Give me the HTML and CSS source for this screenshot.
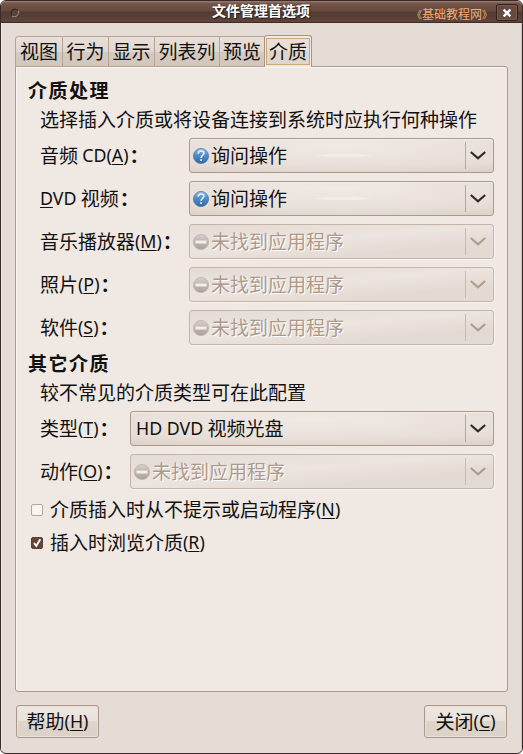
FILE: index.html
```html
<!DOCTYPE html>
<html lang="zh-CN">
<head>
<meta charset="utf-8">
<title>文件管理首选项</title>
<link rel="stylesheet" href="styles.css">
</head>
<body>
<svg class="defs" width="0" height="0">
  <defs>
    <linearGradient id="blue" x1="0" y1="0" x2="0" y2="1"><stop offset="0" stop-color="#a3bcdf"/><stop offset=".45" stop-color="#4c8fc8"/><stop offset="1" stop-color="#3566a0"/></linearGradient>
    <linearGradient id="gray" x1="0" y1="0" x2="0" y2="1"><stop offset="0" stop-color="#d6cec8"/><stop offset="1" stop-color="#a9a29c"/></linearGradient>
    <symbol id="ask" viewBox="0 0 16 16"><circle cx="8" cy="8" r="7.6" fill="url(#blue)" stroke="#3f76ae" stroke-width=".7"/><path d="M5.2 5.7C5.3 3.8 6.3 2.9 8.1 2.9c1.7 0 2.8.9 2.8 2.4 0 2.1-2.8 2.2-2.8 4.6" fill="none" stroke="#e8f1fa" stroke-width="1.5"/><path d="M7.2 11.2h1.8v1.8H7.2z" fill="#e8f1fa"/></symbol>
    <symbol id="none" viewBox="0 0 16 16"><circle cx="8" cy="8" r="7.6" fill="url(#gray)" stroke="#b8afa8" stroke-width=".7"/><rect x="2.2" y="6.2" width="11.6" height="3.6" rx=".5" fill="#f3eeea" stroke="#bbb2ab" stroke-width=".5"/></symbol>
    <symbol id="arrow" viewBox="0 0 16 9"><path d="M.8 1L8 7.4 15.2 1" fill="none" stroke="currentColor" stroke-width="2.2"/></symbol>
  </defs>
</svg>
<div class="window">
  <header class="titlebar">
    <svg class="menu-dot" viewBox="0 0 12 12"><circle cx="6" cy="6" r="4" fill="#5b4339" stroke="#35241f"/><path d="M3 9a4.3 4.3 0 0 0 6.3-5.5" fill="none" stroke="#ad9589"/></svg>
    <h1>文件管理首选项</h1>
    <span class="mark"><small>《</small>基础教程网<small>》</small></span>
    <button class="close"><svg viewBox="0 0 10 10"><path d="M1.6 1.6l6.8 6.8M8.4 1.6L1.6 8.4" stroke="#fff" stroke-width="2.3"/></svg></button>
  </header>
  <main class="content">
    <nav class="tabs">
      <div class="tab w2 first">视图</div><div class="tab w2">行为</div><div class="tab w2">显示</div><div class="tab w3">列表列</div><div class="tab w2">预览</div><div class="tab active"><span>介质</span></div>
    </nav>
    <section class="panel">
      <h2>介质处理</h2>
      <p class="hint">选择插入介质或将设备连接到系统时应执行何种操作</p>
      <div class="form">
        <label>音频 <b>CD(<u>A</u>)</b><em>：</em></label><div class="combo"><svg class="ico"><use href="#ask"/></svg><span class="value">询问操作</span><i class="gloss"></i><span class="drop"><svg><use href="#arrow"/></svg></span></div>
        <label><b><u>D</u>VD</b> 视频<em>：</em></label><div class="combo"><svg class="ico"><use href="#ask"/></svg><span class="value">询问操作</span><i class="gloss"></i><span class="drop"><svg><use href="#arrow"/></svg></span></div>
        <label>音乐播放器<b>(<u>M</u>)</b><em>：</em></label><div class="combo off"><svg class="ico"><use href="#none"/></svg><span class="value">未找到应用程序</span><span class="drop"><svg><use href="#arrow"/></svg></span></div>
        <label>照片<b>(<u>P</u>)</b><em>：</em></label><div class="combo off"><svg class="ico"><use href="#none"/></svg><span class="value">未找到应用程序</span><span class="drop"><svg><use href="#arrow"/></svg></span></div>
        <label>软件<b>(<u>S</u>)</b><em>：</em></label><div class="combo off"><svg class="ico"><use href="#none"/></svg><span class="value">未找到应用程序</span><span class="drop"><svg><use href="#arrow"/></svg></span></div>
      </div>
      <h2 class="second">其它介质</h2>
      <p class="hint">较不常见的介质类型可在此配置</p>
      <div class="form narrow">
        <label>类型<b>(<u>T</u>)</b><em>：</em></label><div class="combo"><span class="value text"><b>HD DVD</b> 视频光盘</span><span class="drop"><svg><use href="#arrow"/></svg></span></div>
        <label>动作<b>(<u>O</u>)</b><em>：</em></label><div class="combo off"><svg class="ico"><use href="#none"/></svg><span class="value">未找到应用程序</span><span class="drop"><svg><use href="#arrow"/></svg></span></div>
      </div>
      <div class="check"><span class="box"></span><span>介质插入时从不提示或启动程序<b>(<u>N</u>)</b></span></div>
      <div class="check"><span class="box on"><svg viewBox="0 0 12 12"><path d="M2.4 6l2.7 3.4L10 1.6" fill="none" stroke="#fff" stroke-width="2.2"/></svg></span><span>插入时浏览介质<b>(<u>R</u>)</b></span></div>
    </section>
    <footer class="actions">
      <button class="btn">帮助<b>(<u>H</u>)</b></button>
      <button class="btn">关闭<b>(<u>C</u>)</b></button>
    </footer>
  </main>
</div>
</body>
</html>
```
FILE: styles.css
```css
* { box-sizing: border-box; }
body { margin: 0; background: #fff; color: #111; font: 19px/28px "Noto Sans CJK SC", sans-serif; white-space: nowrap; }
h1, h2, p { margin: 0; }
button { margin: 0; padding: 0; font: inherit; color: inherit; }
.defs { display: block; }
b { font: 400 17.8px/1 "Noto Sans", sans-serif; vertical-align: 1px; }
em { font-style: normal; font-weight: 600; margin-left: 1px; }
u { text-decoration-thickness: 1px; text-underline-offset: 2px; text-decoration-skip-ink: none; }
.window { width: 523px; height: 754px; border: 1px solid #382b29; border-radius: 6px; background: #e5dcd6; overflow: hidden; display: flex; flex-direction: column; }
.titlebar { height: 22px; flex: none; background: linear-gradient(#93766a 0 1px, #785649 2px, #664a3e 10px, #523b32 11px, #604439 21px); border-bottom: 1px solid #382b29; display: grid; grid-template-columns: 211px 202px 1fr 23px; padding-right: 3px; align-items: center; color: #fff; }
.menu-dot { width: 12px; height: 12px; margin-left: 8px; }
h1 { font-size: 14px; line-height: 20px; font-weight: 700; text-shadow: 1px 1px 1px #211713; margin-top: -6px; }
.mark { color: #f3ae78; font-size: 12px; line-height: 18px; margin: 4px 0 0 -2px; }
.mark small { font-size: 10px; }
.close { width: 22px; height: 17px; border: 1px solid #30231f; border-radius: 2px; background: #654b40; box-shadow: inset 0 0 0 1px #79594c; display: grid; place-items: center; }
.close svg { width: 10px; height: 10px; }
.content { flex: 1; padding: 12px 14px 15px 13px; display: flex; flex-direction: column; border-left: 1px solid #eee6e0; border-right: 1px solid #cfc3ba; }
.tabs { display: flex; height: 32px; align-items: flex-end; margin-bottom: -1px; z-index: 1; }
.tab { height: 31px; border: 1px solid #b9a392; border-left: 0; background: linear-gradient(#e8e0da, #e0d7d0 50%, #d5cac1 51%, #d3c7bc); text-align: center; line-height: 28px; }
.w2 { width: 46px; }
.w3 { width: 65px; }
.first { width: 48px; border-left: 1px solid #b9a392; border-radius: 3px 0 0 0; }
.tab:nth-child(5) { width: 44px; border-right: 0; }
.active { width: 48px; height: 32px; border: 1px solid #a99485; border-bottom: 0; border-radius: 3px 3px 0 0; background: #f0e8e2; padding: 2px 1px; }
.active span { display: block; height: 27px; line-height: 24px; border: 1px solid #cda778; background: linear-gradient(#e8dfd8 50%, #dfd5cb 50%); }
.panel { width: 493px; height: 626px; flex: none; border: 1px solid #b09a8c; border-radius: 0 3px 3px 3px; background: #f0e8e2; padding: 8px 13px 0 13px; box-shadow: inset 1px 1px #faf6f3; }
h2 { font-size: 19px; line-height: 29px; height: 29px; font-weight: 700; letter-spacing: 1.5px; margin-left: -1px; }
.hint { margin-left: 11px; height: 34px; line-height: 30px; }
.form { margin-left: 11px; display: grid; grid-template-columns: 149px 305px; grid-auto-rows: 35px; row-gap: 8px; align-items: center; }
.form.narrow { grid-template-columns: 90px 364px; }
label { height: 35px; line-height: 33px; }
.combo { height: 35px; border: 1px solid #ad998b; border-radius: 3px; background: radial-gradient(85% 95% at 50% 20%, #f0e9e4 0, #e9e0da 60%, transparent 100%), linear-gradient(#e9e1db 50%, #ddd3c9 90%); box-shadow: inset 0 1px #f2ece8; display: flex; align-items: center; padding-left: 3px; }
.ico { width: 16px; height: 16px; flex: none; margin-right: 2px; }
.value { line-height: 33px; margin-top: -3px; }
.text { margin-left: 2px; }
.gloss { width: 55px; height: 3px; border-radius: 50%; margin-left: 29px; background: #f5f0e9; opacity: .75; }
.drop { width: 28px; height: 27px; margin-left: auto; border-left: 1px solid #b9a695; padding-left: 4px; display: flex; align-items: center; color: #2e2b2b; }
.drop svg { width: 16px; height: 9px; margin-top: -1px; }
.off { border-color: #c6b4a7; background: linear-gradient(175deg, #e4dbd5, #ece4de 45%, #e3dad3 75%); box-shadow: 0 1px #f9f4f1, 1px 0 #f9f4f1; color: #ad998b; text-shadow: 1px 1px #fff; }
.off .drop { color: #b19d90; border-color: #cabaaf; }
.second { margin-top: 3px; }
.check { display: flex; align-items: center; height: 33px; margin-left: 2px; }
.narrow + .check { margin-top: 4px; }
.check > span:last-child { margin-top: -1px; line-height: 32px; }
.box { width: 12px; height: 12px; margin-right: 7px; flex: none; border: 1px solid #b8a597; border-radius: 2px; background: #f8f5f1; }
.on { border-color: #5a4134; background: #644736; display: flex; }
.box svg { width: 10px; height: 10px; }
.actions { display: flex; justify-content: space-between; margin: 13px 0 0 1px; }
.btn { width: 83px; height: 33px; border: 1px solid #ad998b; border-radius: 3px; line-height: 27px; padding-bottom: 2px; background: linear-gradient(#eee7e1, #e9e1db 48%, #ded5cb 50%, #dcd2c7); box-shadow: inset 0 0 0 1px #e8e0d9; }
```
